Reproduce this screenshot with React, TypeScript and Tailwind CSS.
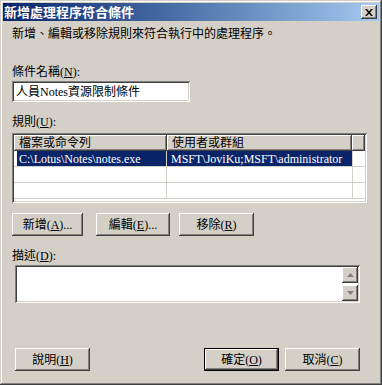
import React from 'react';

const raised =
  'bg-[#d4d0c8] shadow-[inset_-1px_-1px_0_#404040,inset_1px_1px_0_#ffffff,inset_-2px_-2px_0_#808080,inset_2px_2px_0_#d4d0c8]';
const sunken =
  'shadow-[inset_1px_1px_0_#808080,inset_-1px_-1px_0_#ffffff,inset_2px_2px_0_#404040,inset_-2px_-2px_0_#d4d0c8]';

const font = "font-['Liberation_Serif','Noto_Sans_CJK_TC',serif]";

const Key = ({ k }: { k: string }) => (
  <>
    (<span className="underline underline-offset-1">{k}</span>)
  </>
);

const Btn = ({ label, k, dots, w, def }: { label: string; k: string; dots?: boolean; w: string; def?: boolean }) => (
  <div className={`${w} h-[23px] ${def ? 'border border-black' : ''}`}>
    <button className={`w-full h-full ${raised} flex items-center justify-center text-[12px] leading-[14px] text-black`}>
      {label}
      <Key k={k} />
      {dots ? '...' : ''}
    </button>
  </div>
);

const Arrow = ({ up }: { up?: boolean }) => (
  <div className={`w-[16px] h-[16px] ${raised} flex items-center justify-center`}>
    <svg width="7" height="4" viewBox="0 0 7 4">
      <path d={up ? 'M3.5 0L7 4H0z' : 'M0 0h7L3.5 4z'} fill="#808080" />
    </svg>
  </div>
);

export default function App() {
  return (
    <div
      className={`w-[382px] h-[385px] bg-[#d4d0c8] p-[3px] flex flex-col text-black ${font} shadow-[inset_-1px_-1px_0_#404040,inset_1px_1px_0_#d4d0c8,inset_-2px_-2px_0_#808080,inset_2px_2px_0_#ffffff]`}
    >
      <div className="h-[18px] flex items-center justify-between bg-gradient-to-r from-[#0a246a] to-[#a6caf0] pl-[1px] pr-[2px]">
        <span className="text-white font-bold text-[13px] leading-[16px] font-['Noto_Sans_CJK_TC',sans-serif]">
          新增處理程序符合條件
        </span>
        <div className={`w-[16px] h-[14px] ${raised} flex items-center justify-center`}>
          <svg width="8" height="7" viewBox="0 0 8 7">
            <path d="M0 0h2l2 2.5L6 0h2L5 3.5 8 7H6L4 4.5 2 7H0l3-3.5z" fill="#000" />
          </svg>
        </div>
      </div>

      <div className="pl-[9px] flex flex-col text-[12px] leading-[14px]">
        <div className="mt-[6px] h-[14px]">新增、編輯或移除規則來符合執行中的處理程序。</div>

        <div className="mt-[24px] h-[14px]">
          條件名稱
          <Key k="N" />:
        </div>
        <div className={`mt-[2px] w-[178px] h-[21px] bg-white ${sunken} flex items-center px-[4px]`}>
          人員Notes資源限制條件
        </div>

        <div className="mt-[13px] h-[14px]">
          規則
          <Key k="U" />:
        </div>
        <div className={`mt-[4px] w-[355px] h-[70px] bg-white ${sunken} p-[2px] flex flex-col`}>
          <div className="flex h-[16px] shrink-0">
            <div className={`w-[153px] ${raised} pl-[5px] flex items-center`}>檔案或命令列</div>
            <div className={`w-[185px] ${raised} pl-[5px] flex items-center`}>使用者或群組</div>
            <div className={`flex-1 ${raised}`} />
          </div>
          {[0, 1, 2].map((i) => (
            <div key={i} className="flex h-[16px] shrink-0 border-b border-[#d4d0c8]">
              <div className="w-[153px] border-r border-[#d4d0c8] pl-[3px]">
                {i === 0 && (
                  <div className="h-[15px] bg-[#0a246a] text-white pl-[2px] flex items-center">
                    C:\Lotus\Notes\notes.exe
                  </div>
                )}
              </div>
              <div className="w-[186px] border-r border-[#d4d0c8]">
                {i === 0 && (
                  <div className="h-[15px] bg-[#0a246a] text-white pl-[4px] flex items-center">
                    MSFT\JoviKu;MSFT\administrator
                  </div>
                )}
              </div>
            </div>
          ))}
        </div>

        <div className="mt-[10px] flex">
          <Btn label="新增" k="A" dots w="w-[71px]" />
          <div className="ml-[13px]">
            <Btn label="編輯" k="E" dots w="w-[74px]" />
          </div>
          <div className="ml-[9px]">
            <Btn label="移除" k="R" w="w-[75px]" />
          </div>
        </div>

        <div className="mt-[13px] h-[14px]">
          描述
          <Key k="D" />:
        </div>
        <div className={`mt-[2px] ml-[3px] w-[345px] h-[38px] bg-white ${sunken} p-[2px] flex justify-end`}>
          <div className="flex flex-col justify-between">
            <Arrow up />
            <Arrow />
          </div>
        </div>

        <div className="mt-[45px] ml-[3px] flex w-[345px]">
          <Btn label="說明" k="H" w="w-[75px]" />
          <div className="ml-auto">
            <Btn label="確定" k="O" w="w-[75px]" def />
          </div>
          <div className="ml-[6px]">
            <Btn label="取消" k="C" w="w-[75px]" />
          </div>
        </div>
      </div>
    </div>
  );
}
